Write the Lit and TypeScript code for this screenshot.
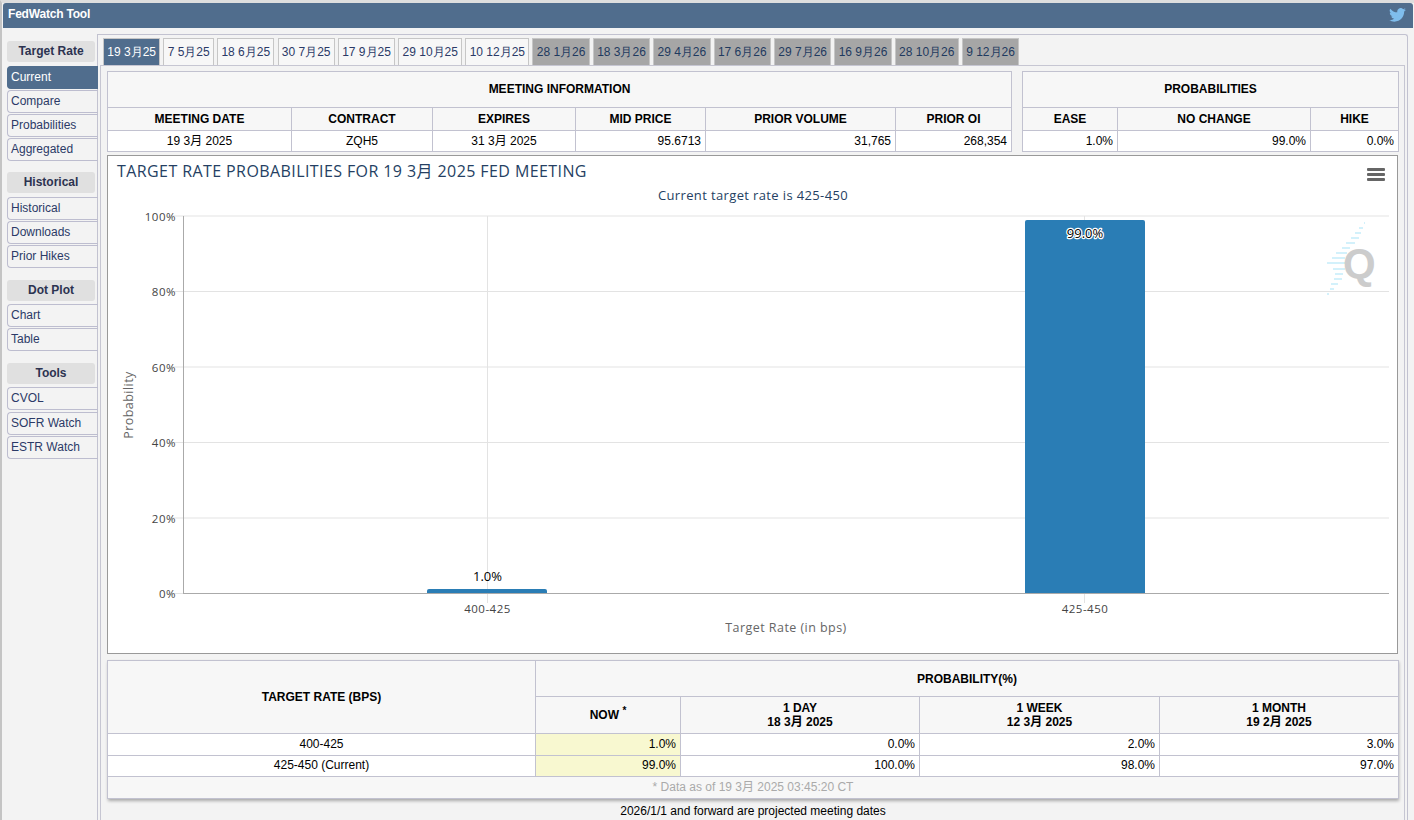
import { LitElement, html, css, svg } from "lit";
import { customElement } from "lit/decorators.js";

const tabs = ["19 3月25","7 5月25","18 6月25","30 7月25","17 9月25","29 10月25","10 12月25","28 1月26","18 3月26","29 4月26","17 6月26","29 7月26","16 9月26","28 10月26","9 12月26"];
const groups: [string, string[]][] = [
  ["Target Rate", ["Current","Compare","Probabilities","Aggregated"]],
  ["Historical", ["Historical","Downloads","Prior Hikes"]],
  ["Dot Plot", ["Chart","Table"]],
  ["Tools", ["CVOL","SOFR Watch","ESTR Watch"]],
];
const gridY = [[216,"100%"],[291.5,"80%"],[367,"60%"],[442.5,"40%"],[518,"20%"],[593.5,"0%"]] as [number,string][];
const stripes = [[1364,1365,222],[1359,1363,227],[1355,1361,232],[1351,1359,237],[1346,1355,242],[1342,1350,247],[1336,1347,252],[1332,1345,257],[1327,1345,262],[1333,1345,268],[1335,1343,273],[1334,1342,278],[1331,1338,283],[1330,1334,288],[1327,1329,293]];

@customElement("app-root")
export class AppRoot extends LitElement {
  static styles = css`
    :host { display:block; height:820px; overflow:hidden; background:#f3f3f3; font:12px "Liberation Sans",Arial,sans-serif; color:#000; box-sizing:border-box; border-left:2px solid #c4c4c4; border-top:3px solid #dedede; }
    * { box-sizing:border-box; }
    .top { height:25px; margin:0 1px 0 1px; background:#506d8d; border-radius:3px 3px 0 0; display:flex; align-items:center; justify-content:space-between; padding:0 7px 3px 5px; color:#fff; font-weight:bold; letter-spacing:-.2px; }
    .top svg { width:17px; height:14px; fill:#7fbdec; margin-top:2px; }
    .main { display:flex; padding:6px 6px 0 5px; }
    .side { width:91px; flex:none; padding-top:7px; position:relative; z-index:1; }
    .gh { width:88px; height:21px; margin-bottom:4px; background:#e0e0e0; border-radius:3px; text-align:center; line-height:20px; font-weight:bold; color:#2c3350; }
    .group { margin-bottom:11px; }
    .group:nth-child(n+3) .gh { margin-bottom:3px; }
    .group:nth-child(2), .group:nth-child(3) { margin-bottom:12px; }
    .it { height:23px; margin-bottom:1px; padding:0 0 3px 3px; border:1px solid #bdbdcf; border-right:0; border-radius:4px 0 0 4px; line-height:20px; color:#2b3a67; }
    .group:last-child .it:nth-child(2) { margin-bottom:2px; }
    .it.on { background:#506d8d; color:#fff; border-color:#506d8d; }
    .frame { flex:1; margin-left:-1px; height:900px; border:1px solid #c2c2d0; border-bottom:0; border-radius:0 3px 0 0; padding:3px 2px 0 2px; min-width:0; }
    .tabs { display:flex; gap:3.1px; height:27px; padding-left:3px; }
    .tab { padding:0 3.3px; border:1px solid #c6c6c6; border-bottom:0; background:#f7f7f7; color:#2b3a67; line-height:27px; white-space:nowrap; }
    .tab.on { background:#506d8d; color:#fff; }
    .tab.off { background:#a6a6a6; color:#1f3a5f; }
    .panel { border:1px solid #c6c6d2; min-height:860px; padding:5px 7px 0 6px; font-family:"Liberation Sans","Noto Sans CJK SC",Arial,sans-serif; }
    .row { display:flex; gap:10px; margin-bottom:3px; }
    table { border-collapse:collapse; table-layout:fixed; background:#fff; }
    th, td { border:1px solid #c2c2d0; padding:0 4px; overflow:hidden; line-height:14px; }
    th { background:#f7f7f7; font-size:12px; }
    td { text-align:right; font-weight:normal; }
    td.c { text-align:center; }
    .t1 { height:36px; } .t1 th { padding-bottom:2px; } .t2 { height:23px; } .t3 { height:21px; }
    .chart { width:1291px; height:499px; border:1px solid #999; background:#fff; margin-bottom:6px; display:block; }
    .chart svg { display:block; width:1289px; height:497px; }
    .chart text { font-family:"Open Sans",sans-serif; }
    .ttl { font-size:16px; letter-spacing:.41px; fill:#253f63; font-family:"Open Sans","Noto Sans CJK SC",sans-serif !important; }
    .sub { font-size:13px; letter-spacing:.37px; fill:#253f63; }
    .lab { font-size:11.5px; letter-spacing:.5px; fill:#444; }
    .axt { font-size:12.5px; letter-spacing:.45px; fill:#666; }
    .dl { font-size:13px; fill:#000; }
    .dlw { font-size:13px; fill:#000; stroke:#fff; stroke-width:2.5px; paint-order:stroke; stroke-linejoin:round; }
    .q { font-size:42px; font-weight:bold; fill:#ccc; font-family:"Liberation Sans",sans-serif !important; }
    .big { width:1291px; box-shadow:1px 2px 3px rgba(0,0,0,.3); }
    .h36 { height:36px; } .h37 { height:37px; } .h22 { height:22px; } .h21 { height:21px; } .h21 td, .h22 td { padding-bottom:2px; }
    .now { background:#f8f8d0; }
    td.foot { background:#f7f7f7; text-align:center; color:#aaa; height:22px; padding-bottom:2px; }
    sup { font-size:10px; line-height:0; }
    .note { width:1292px; text-align:center; margin-top:5px; }
  `;

  private tbl(width: number, cols: number[], body: unknown) {
    return html`<table style="width:${width}px"><colgroup>${cols.map(c => html`<col style="width:${c}px">`)}</colgroup>${body}</table>`;
  }

  render() {
    return html`
      <div class="top"><span>FedWatch Tool</span>
        <svg viewBox="0 0 24 20"><path d="M24 2.4a9.8 9.8 0 0 1-2.8.8A4.9 4.9 0 0 0 23.3.5a9.800 9.800 0 0 1-3.100 1.200A4.900 4.900 0 0 0 11.800 6.200 13.900 13.900 0 0 1 1.700.9a4.900 4.900 0 0 0 1.500 6.600 4.900 4.900 0 0 1-2.200-.6c0 2.400 1.700 4.400 3.900 4.900a4.900 4.900 0 0 1-2.200.1 4.900 4.900 0 0 0 4.600 3.400A9.900 9.900 0 0 1 0 17.300 13.900 13.900 0 0 0 7.500 19.500c9.100 0 14.300-7.700 14-14.600A10 10 0 0 0 24 2.400z"/></svg>
      </div>
      <div class="main">
        <div class="side">
          ${groups.map(([g, items]) => html`<div class="group"><div class="gh">${g}</div>${items.map(i => html`<div class="it ${i === "Current" ? "on" : ""}">${i}</div>`)}</div>`)}
        </div>
        <div class="frame">
          <div class="tabs">${tabs.map((t, i) => html`<div class="tab ${i === 0 ? "on" : i > 6 ? "off" : ""}">${t}</div>`)}</div>
          <div class="panel">
            <div class="row">
              ${this.tbl(904, [184,141,143,130,190,116], html`
                <tr class="t1"><th colspan="6">MEETING INFORMATION</th></tr>
                <tr class="t2"><th>MEETING DATE</th><th>CONTRACT</th><th>EXPIRES</th><th>MID PRICE</th><th>PRIOR VOLUME</th><th>PRIOR OI</th></tr>
                <tr class="t3"><td class="c">19 3月 2025</td><td class="c">ZQH5</td><td class="c">31 3月 2025</td><td>95.6713</td><td>31,765</td><td>268,354</td></tr>`)}
              ${this.tbl(376, [95,193,88], html`
                <tr class="t1"><th colspan="3">PROBABILITIES</th></tr>
                <tr class="t2"><th>EASE</th><th>NO CHANGE</th><th>HIKE</th></tr>
                <tr class="t3"><td>1.0%</td><td>99.0%</td><td>0.0%</td></tr>`)}
            </div>
            <div class="chart">${this.chart()}</div>
            <div class="big">${this.tbl(1291, [428,145,239,240,239], html`
              <tr class="h36"><th rowspan="2">TARGET RATE (BPS)</th><th colspan="4">PROBABILITY(%)</th></tr>
              <tr class="h37"><th>NOW <sup>*</sup></th><th>1 DAY<br>18 3月 2025</th><th>1 WEEK<br>12 3月 2025</th><th>1 MONTH<br>19 2月 2025</th></tr>
              <tr class="h22"><td class="c">400-425</td><td class="now">1.0%</td><td>0.0%</td><td>2.0%</td><td>3.0%</td></tr>
              <tr class="h21"><td class="c">425-450 (Current)</td><td class="now">99.0%</td><td>100.0%</td><td>98.0%</td><td>97.0%</td></tr>
              <tr><td class="foot" colspan="5">* Data as of 19 3月 2025 03:45:20 CT</td></tr>`)}</div>
            <div class="note">2026/1/1 and forward are projected meeting dates</div>
          </div>
        </div>
      </div>`;
  }

  private chart() {
    return svg`<svg viewBox="108 156 1289 497" xmlns="http://www.w3.org/2000/svg">
      ${gridY.map(([y, l]) => svg`<line x1="172" x2="1389" y1=${y} y2=${y} stroke="#e3e3e3"/><text class="lab" x="176" y=${y + 4.5} text-anchor="end">${l}</text>`)}
      ${[487.5, 1084.5].map(x => svg`<line x1=${x} x2=${x} y1="216" y2="603" stroke="#e3e3e3"/>`)}
      <line x1="183.500" x2="183.500" y1="216" y2="594" stroke="#aaa"/>
      <line x1="183" x2="1389" y1="593.500" y2="593.500" stroke="#aaa"/>
      <path d="M427 593V591a2 2 0 0 1 2-2H545a2 2 0 0 1 2 2V593Z" fill="#2a7db5"/>
      <path d="M1025 593V222a2 2 0 0 1 2-2H1143a2 2 0 0 1 2 2V593Z" fill="#2a7db5"/>
      ${stripes.map(([a, b, y]) => svg`<rect x=${a} y=${y} width=${b - a} height="2" fill="#d3f1fb"/>`)}
      <text class="q" x="1343" y="278">Q</text>
      <text class="ttl" x="117" y="177">TARGET RATE PROBABILITIES FOR 19 3月 2025 FED MEETING</text>
      <text class="sub" x="753" y="200" text-anchor="middle">Current target rate is 425-450</text>
      <text class="dl" x="487.500" y="581" text-anchor="middle">1.0%</text>
      <text class="dlw" x="1085" y="238" text-anchor="middle">99.0%</text>
      <text class="lab" x="487.500" y="613" text-anchor="middle">400-425</text>
      <text class="lab" x="1085" y="613" text-anchor="middle">425-450</text>
      <text class="axt" x="786" y="632" text-anchor="middle">Target Rate (in bps)</text>
      <text class="axt" transform="translate(133 405) rotate(-90)" text-anchor="middle">Probability</text>
      <g fill="#666"><rect x="1367" y="168" width="18" height="3" rx="1"/><rect x="1367" y="173" width="18" height="3" rx="1"/><rect x="1367" y="178" width="18" height="3" rx="1"/></g>
    </svg>`;
  }
}
